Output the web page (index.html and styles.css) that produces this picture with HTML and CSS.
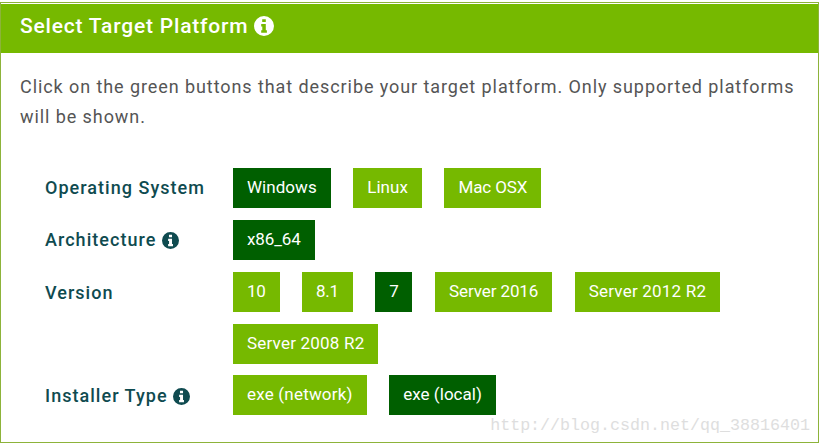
FILE: index.html
```html
<!DOCTYPE html>
<html lang="en">
<head>
<meta charset="utf-8">
<title>Select Target Platform</title>
<link rel="stylesheet" href="styles.css">
</head>
<body>
<svg class="defs" width="0" height="0" aria-hidden="true">
  <symbol id="info" viewBox="0 0 20 20">
    <path fill-rule="evenodd" d="M10 0a10 10 0 1 0 0 20a10 10 0 0 0 0-20ZM8.2 3.2h3.6v2.9H8.2ZM7.2 8h4.6v6.2h1.1v2.6H7.2v-2.6h1.1v-3.6H7.2Z"/>
  </symbol>
</svg>
<main class="panel">
  <h1 class="panel-head">Select Target Platform<svg class="info info-lg"><use href="#info"/></svg></h1>
  <p class="intro">Click on the green buttons that describe your target platform. Only supported platforms will be shown.</p>
  <div class="options">
    <div class="label">Operating System</div>
    <div class="btns">
      <span class="btn on">Windows</span><span class="btn">Linux</span><span class="btn tight">Mac OSX</span>
    </div>
    <div class="label">Architecture <svg class="info"><use href="#info"/></svg></div>
    <div class="btns">
      <span class="btn on tight">x86_64</span>
    </div>
    <div class="label ver">Version</div>
    <div class="btns">
      <span class="btn num">10</span><span class="btn num">8.1</span><span class="btn on num">7</span><span class="btn tight">Server 2016</span><span class="btn wide">Server 2012 R2</span><span class="btn wide">Server 2008 R2</span>
    </div>
    <div class="label last">Installer Type <svg class="info"><use href="#info"/></svg></div>
    <div class="btns last">
      <span class="btn wide">exe (network)</span><span class="btn on">exe (local)</span>
    </div>
  </div>
  <div class="watermark">http://blog.csdn.net/qq_38816401</div>
</main>
</body>
</html>
```
FILE: styles.css
```css
* { box-sizing: border-box; }
html, body { margin: 0; background: #fff; }
body { width: 822px; height: 445px; overflow: hidden; padding-top: 2px; font-family: Roboto, "Liberation Sans", sans-serif; }
.defs { position: absolute; }
.panel { position: relative; width: 819px; height: 441px; border: 1px solid #8db33a; }
.panel-head { margin: 1px 0 0; height: 49px; background: #76b900; color: #fff; font-size: 21px; font-weight: 500; padding: 0 0 5px 19px; letter-spacing: .8px; display: flex; align-items: center; gap: 6px; white-space: pre; }
.info { width: 17px; height: 17px; fill: #0f4b50; vertical-align: -3px; }
.info-lg { width: 20px; height: 20px; fill: #fff; }
.intro { margin: 0; padding: 19px 10px 0 19px; font-size: 18px; line-height: 30px; color: #555; letter-spacing: .92px; }
.options { display: grid; grid-template-columns: 188px 1fr; padding: 36px 0 0 44px; row-gap: 12px; }
.label { height: 40px; line-height: 40px; font-size: 18px; font-weight: 500; color: #0f4b50; letter-spacing: 1.03px; white-space: nowrap; }
.btns { display: flex; flex-wrap: wrap; gap: 12px 22.5px; width: 520px; }
.last { margin-top: -1px; }
.label.last { line-height: 41px; }
.label.ver { line-height: 41px; }
.btn { height: 40px; line-height: 39px; padding: 0 14px; background: #76b900; color: #fff; font-size: 17px; letter-spacing: .04px; white-space: nowrap; }
.btn.on { background: #005f00; }
.btn.num { letter-spacing: -.3px; }
.btn.tight { letter-spacing: -.1px; }
.btn.wide { letter-spacing: .2px; }
.watermark { position: absolute; right: 8px; bottom: 6px; font: 16.67px/20px "Liberation Mono", monospace; color: #dedede; }
```
